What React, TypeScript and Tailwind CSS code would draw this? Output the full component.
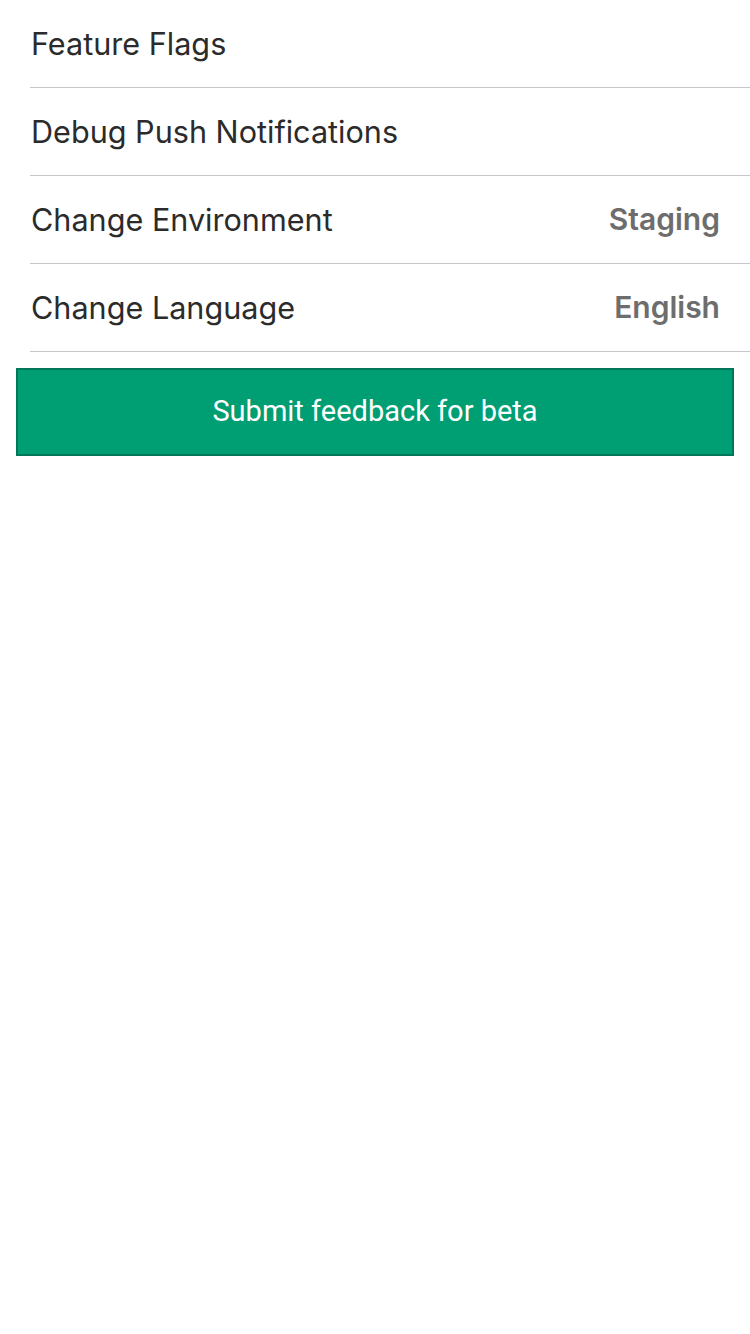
import React from "react";

const rows: { label: string; value?: string }[] = [
  { label: "Feature Flags" },
  { label: "Debug Push Notifications" },
  { label: "Change Environment", value: "Staging" },
  { label: "Change Language", value: "English" },
];

export default function App() {
  return (
    <div className="w-[750px] min-h-[1334px] bg-white" style={{ fontFamily: "Inter, 'Noto Sans', sans-serif" }}>
      <div className="pl-[30px]">
        {rows.map((r) => (
          <div key={r.label} className="flex h-[88px] items-center justify-between border-b border-[#c8c7cc] pr-[30px]">
            <span className="pl-px text-[30.6px] text-[#2b2b2b]">{r.label}</span>
            {r.value && <span className="text-[30px] font-semibold text-[#6d6d6d]">{r.value}</span>}
          </div>
        ))}
      </div>
      <div className="px-[16px] pt-[16px]">
        <button
          className="flex h-[88px] w-full items-center justify-center border-2 border-[#00775a] bg-[#009e73] text-[29px] text-white"
          style={{ fontFamily: "Roboto, sans-serif" }}
        >
          Submit feedback for beta
        </button>
      </div>
    </div>
  );
}
